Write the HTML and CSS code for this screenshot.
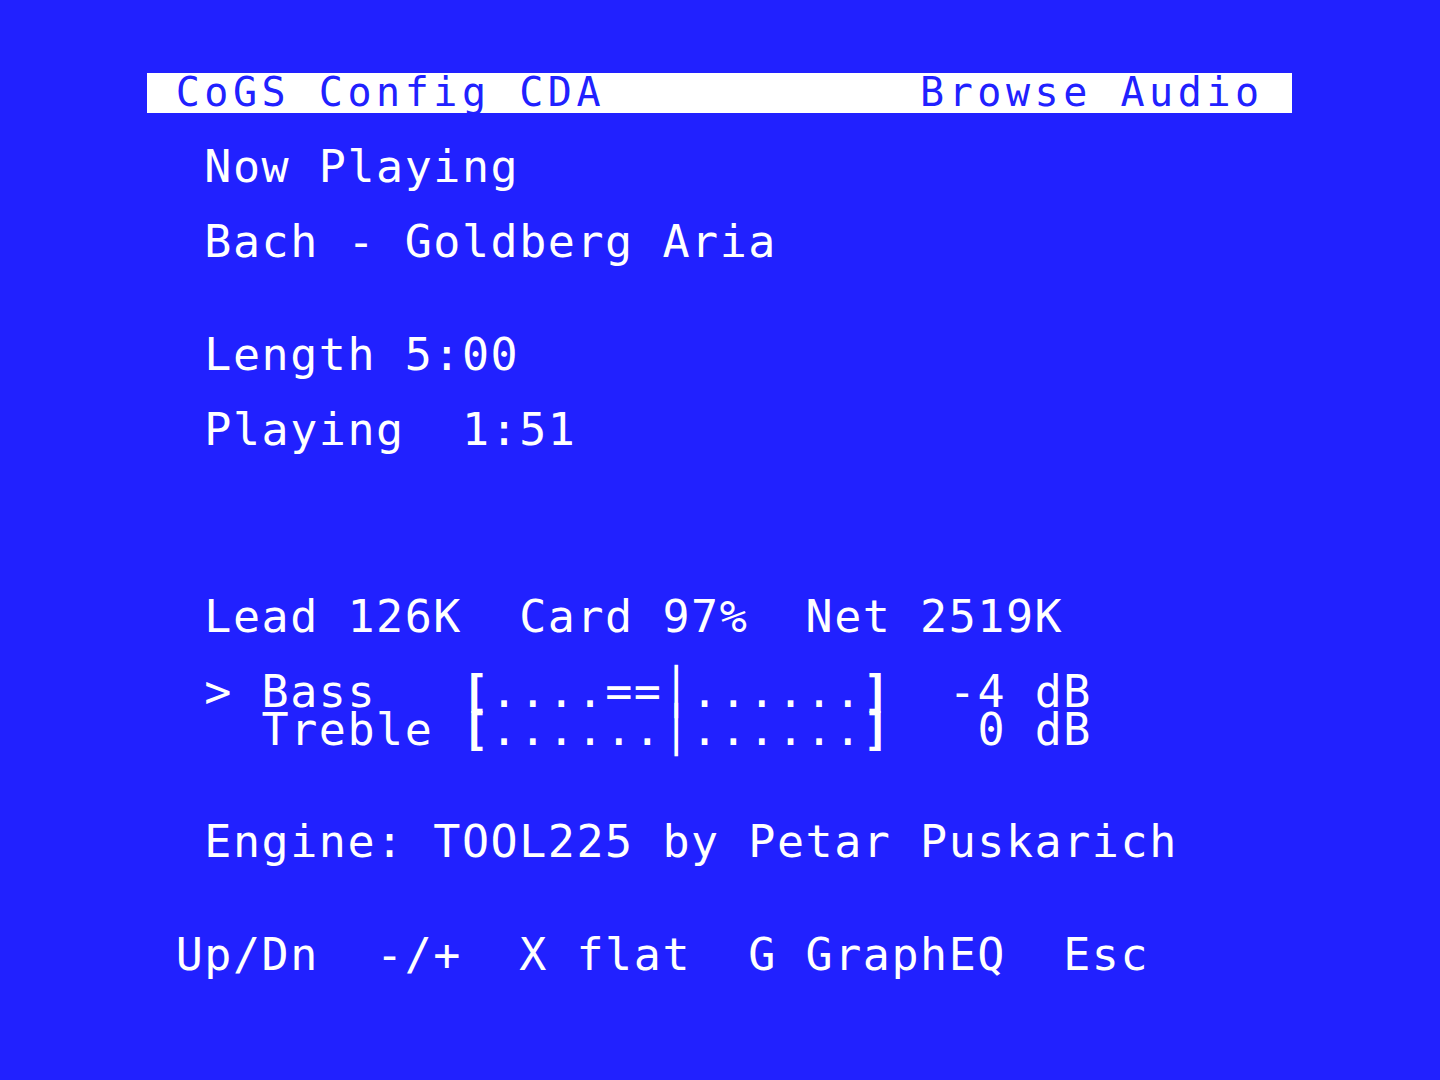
FILE: index.html
```html
<!DOCTYPE html>
<html lang="en">
<head>
    <meta charset="UTF-8">
    <title>CoGS Config CDA</title>
    <link rel="stylesheet" href="styles.css">
</head>
<body>

    <!-- Pantalla de texto 40x24 -->
    <div class="screen">
        <div class="row title-bar"> CoGS Config CDA           Browse Audio </div>
        <div class="row"></div>
        <div class="row">  Now Playing</div>
        <div class="row"></div>
        <div class="row">  Bach - Goldberg Aria</div>
        <div class="row"></div>
        <div class="row"></div>
        <div class="row">  Length 5:00</div>
        <div class="row"></div>
        <div class="row">  Playing  1:51</div>
        <div class="row"></div>
        <div class="row"></div>
        <div class="row"></div>
        <div class="row"></div>
        <div class="row">  Lead 126K  Card 97%  Net 2519K</div>
        <div class="row"></div>

        <!-- Ecualizador -->
        <div class="row">  &gt; Bass   <span class="bracket">[</span>....==<span class="center">│</span>......<span class="bracket">]</span>  -4 dB</div>
        <div class="row">    Treble <span class="bracket">[</span>......<span class="center">│</span>......<span class="bracket">]</span>   0 dB</div>

        <div class="row"></div>
        <div class="row"></div>
        <div class="row">  Engine: TOOL225 by Petar Puskarich</div>
        <div class="row"></div>
        <div class="row"></div>
        <div class="row"> Up/Dn  -/+  X flat  G GraphEQ  Esc</div>
    </div>

</body>
</html>
```

FILE: styles.css
```css
/* Estilos generales */
body {
    margin: 0;
    background-color: #2121ff;
    color: #ffffff;
    font-family: "DejaVu Sans Mono", "Liberation Mono", monospace;
    overflow: hidden;
}

/* Pantalla de 40 columnas */
.screen {
    width: 1145px;
    margin-left: 147px;
    padding-top: 73px;
    height: 1007px;
}

.row {
    height: 37.5px;
    line-height: 37.5px;
    font-size: 45px;
    letter-spacing: 1.54px;
    white-space: pre;
}

/* Barra de titulo en video inverso */
.title-bar {
    box-sizing: border-box;
    height: 39.5px;
    padding-top: 1px;
    margin-bottom: -2px;
    font-size: 40px;
    line-height: 36px;
    letter-spacing: 4.55px;
    background-color: #ffffff;
    color: #2121ff;
}

.bracket {
    font-weight: bold;
}

.center {
    font-weight: bold;
}
```
